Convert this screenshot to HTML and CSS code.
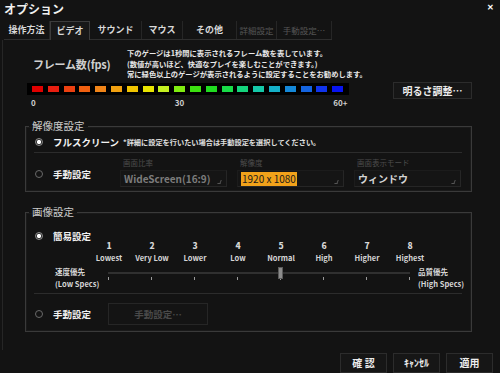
FILE: index.html
```html
<!DOCTYPE html>
<html lang="ja">
<head>
<meta charset="UTF-8">
<meta name="viewport" content="width=device-width, initial-scale=1.0">
<title>オプション</title>
<link rel="stylesheet" href="styles.css">
</head>
<body>
<div class="title-bar">
<span class="title">オプション</span>
<span class="close">✕</span>
</div>
<div class="tabs">
<div class="tab">操作方法</div>
<div class="tab active">ビデオ</div>
<div class="tab">サウンド</div>
<div class="tab">マウス</div>
<div class="tab">その他</div>
<div class="tab disabled">詳細設定</div>
<div class="tab disabled">手動設定…</div>
</div>
<div class="panel">
<div class="fps">
<div class="fps-head">
<div class="fps-title">フレーム数(fps)</div>
<div class="fps-desc">
<p>下のゲージは1秒間に表示されるフレーム数を表しています。</p>
<p>(数値が高いほど、快適なプレイを楽しむことができます。)</p>
<p>常に緑色以上のゲージが表示されるように設定することをお勧めします。</p>
</div>
</div>
<div class="fps-row">
<div class="gauge-wrap">
<div class="gauge">
<span></span><span></span><span></span><span></span><span></span>
<span></span><span></span><span></span><span></span><span></span>
<span></span><span></span><span></span><span></span><span></span>
<span></span><span></span><span></span><span></span><span></span>
</div>
<div class="gauge-scale">
<span>0</span>
<span class="mid">30</span>
<span class="max">60+</span>
</div>
</div>
<button class="btn brightness">明るさ調整…</button>
</div>
</div>

<fieldset class="group">
<legend>解像度設定</legend>
<div class="row full">
<span class="radio checked"></span>
<span class="opt">フルスクリーン</span>
<span class="note">*詳細に設定を行いたい場合は手動設定を選択してください。</span>
</div>
<div class="row manual-res">
<div class="opt-box">
<span class="radio"></span>
<span class="opt">手動設定</span>
</div>
<div class="select-col">
<div class="select-label">画面比率</div>
<div class="select dim"><span>WideScreen(16:9)</span><i class="arrow"></i></div>
</div>
<div class="select-col">
<div class="select-label">解像度</div>
<div class="select"><span class="hl">1920 x 1080</span><i class="arrow"></i></div>
</div>
<div class="select-col">
<div class="select-label">画面表示モード</div>
<div class="select"><span>ウィンドウ</span><i class="arrow"></i></div>
</div>
</div>
</fieldset>

<fieldset class="group gfx">
<legend>画像設定</legend>
<div class="easy">
<div class="row easy-head">
<span class="radio checked"></span>
<span class="opt">簡易設定</span>
</div>
<div class="levels">
<div class="level"><b>1</b><span>Lowest</span></div>
<div class="level"><b>2</b><span>Very Low</span></div>
<div class="level"><b>3</b><span>Lower</span></div>
<div class="level"><b>4</b><span>Low</span></div>
<div class="level"><b>5</b><span>Normal</span></div>
<div class="level"><b>6</b><span>High</span></div>
<div class="level"><b>7</b><span>Higher</span></div>
<div class="level"><b>8</b><span>Highest</span></div>
</div>
<div class="track-row">
<div class="side left">速度優先<br>(Low Specs)</div>
<div class="track">
<div class="track-line"></div>
<div class="ticks"><i></i><i></i><i></i><i></i><i></i><i></i><i></i><i></i></div>
<div class="thumb"></div>
</div>
<div class="side right">品質優先<br>(High Specs)</div>
</div>
</div>
<div class="row manual-gfx">
<div class="opt-box narrow">
<span class="radio"></span>
<span class="opt">手動設定</span>
</div>
<button class="btn manual-btn" disabled>手動設定…</button>
</div>
</fieldset>
</div>

<div class="footer">
<button class="btn foot">確 認</button>
<button class="btn foot">ｷｬﾝｾﾙ</button>
<button class="btn foot">適用</button>
</div>
</body>
</html>
```

FILE: styles.css
```css
body { margin: 0; width: 500px; height: 373px; overflow: hidden; background-color: #131313; color: #e2e2e2; font-family: "Noto Sans CJK JP", "Noto Sans", sans-serif; }
p { margin: 0; }

.title-bar { display: flex; justify-content: space-between; align-items: center; height: 21px; padding: 0 6px 0 4px; box-sizing: border-box; }
.title { font-size: 12px; font-weight: bold; line-height: 16px; color: #f0f0f0; margin-top: -3px; }
.close { font-size: 8px; font-weight: bold; color: #fff; margin-top: -9px; }

.tabs { display: grid; width: max-content; grid-template-columns: 46px 40px 52px 41px 54px 40px 55px; margin-left: 4px; height: 19px; border-bottom: 1px solid #2e2e2e; box-sizing: border-box; }
.tab { font-size: 9px; font-weight: bold; line-height: 18px; text-align: center; color: #d8d8d8; border-right: 1px solid #262626; }
.tab.active { background-color: #181818; border: 1px solid #3c3c3c; border-bottom: none; line-height: 17px; margin-bottom: -1px; }
.tab.disabled { color: #555; font-weight: normal; font-size: 8.5px; }

.panel { margin-left: 2px; border-left: 1px solid #262626; padding: 0 28px 18px 22px; }

.fps-head { display: flex; align-items: center; padding-top: 8px; }
.fps-title { width: 94px; padding-left: 8px; font-size: 11px; font-weight: bold; color: #cfcfcf; line-height: 14px; letter-spacing: -0.2px; }
.fps-desc { font-size: 7.3px; line-height: 10.5px; color: #e8e8e8; font-weight: bold; }
.fps-row { display: flex; align-items: flex-start; margin-top: 3.5px; }
.gauge-wrap { margin-left: 2px; }
.gauge { display: flex; gap: 4.8px; background-color: #000; padding: 3px 6px 3px 5px; height: 6px; }
.gauge span { width: 11px; height: 6px; }
.gauge span:nth-child(1) { background-color: #e00000; }
.gauge span:nth-child(2) { background-color: #e81e10; }
.gauge span:nth-child(3) { background-color: #ec4010; }
.gauge span:nth-child(4) { background-color: #f06010; }
.gauge span:nth-child(5) { background-color: #f08418; }
.gauge span:nth-child(6) { background-color: #f0a010; }
.gauge span:nth-child(7) { background-color: #f0c400; }
.gauge span:nth-child(8) { background-color: #e8e400; }
.gauge span:nth-child(9) { background-color: #c4f020; }
.gauge span:nth-child(10) { background-color: #80ec10; }
.gauge span:nth-child(11) { background-color: #3ce010; }
.gauge span:nth-child(12) { background-color: #20dc20; }
.gauge span:nth-child(13) { background-color: #18dc48; }
.gauge span:nth-child(14) { background-color: #14d47c; }
.gauge span:nth-child(15) { background-color: #14c8a8; }
.gauge span:nth-child(16) { background-color: #14b0c8; }
.gauge span:nth-child(17) { background-color: #1488d8; }
.gauge span:nth-child(18) { background-color: #1464e0; }
.gauge span:nth-child(19) { background-color: #1034ec; }
.gauge span:nth-child(20) { background-color: #0814f0; }
.gauge-scale { display: flex; margin-top: 3px; padding-left: 4px; font-size: 8px; font-weight: bold; line-height: 10px; color: #cfcfcf; }
.gauge-scale .mid { margin-left: 139px; }
.gauge-scale .max { margin-left: 149px; }

.btn { font-family: inherit; background-color: #161616; border: 1px solid #2c2c2c; color: #ececec; font-weight: bold; padding: 0; cursor: pointer; }
.brightness { margin: -1px 0 0 auto; width: 79px; height: 17px; font-size: 10px; line-height: 15px; }

.group { margin: 12px 0 0; padding: 0 9px 0 8px; border: 1px solid #3a3a3a; box-shadow: inset 0 0 0 1px #1a1a1a; min-width: 0; }
.group legend { margin-left: -5px; padding: 0 3px; font-size: 10.5px; line-height: 12px; color: #cccccc; }
.gfx { margin-top: 14px; }

.row { display: flex; align-items: center; }
.radio { width: 6px; height: 6px; border: 1px solid #6a6a6a; border-radius: 50%; margin: 0 10px 0 1px; flex: none; }
.radio.checked { background: radial-gradient(circle, #ffffff 0 1.8px, #2a2a2a 2.4px); border-color: #8a8a8a; }
.opt { font-size: 9.5px; font-weight: bold; line-height: 12px; color: #f2f2f2; }
.full { height: 20px; border-bottom: 1px solid #2c2c2c; }
.note { margin-left: 4px; font-size: 7.2px; font-weight: bold; color: #e0e0e0; }

.manual-res { padding: 5px 0 4px; }
.opt-box { display: flex; align-items: center; width: 86px; margin-top: 3px; }
.opt-box.narrow { width: 74px; margin-top: 0; }
.select-col { width: 107px; margin-right: 10px; }
.select-col:last-child { margin-right: 0; }
.select-label { font-size: 7.5px; line-height: 10px; color: #4c4c4c; padding-left: 3px; }
.select { display: flex; align-items: center; height: 17px; margin-top: 2px; padding: 0 3px; border: 1px solid #262626; border-top-color: #1c1c1c; border-left-color: #1c1c1c; background-color: #151515; font-size: 10px; font-weight: bold; color: #d4d4d4; box-sizing: border-box; }
.select.dim { color: #7c7c7c; }
.select .hl { background-color: #f2a21a; color: #1a1a1a; padding: 0 1px; line-height: 14px; font-weight: normal; }
.select .arrow { margin: 6px 2px 0 auto; width: 2px; height: 3px; border-right: 1px solid #555; border-bottom: 1px solid #555; transform: skewX(-20deg); }

.easy { border-bottom: 1px solid #2c2c2c; padding-bottom: 3px; }
.easy-head { margin-top: 10px; height: 15px; }
.levels { display: grid; grid-template-columns: repeat(8, 43px); margin: -3px 0 0 53.5px; text-align: center; font-weight: bold; color: #d6d6d6; }
.level b { display: block; font-size: 8.5px; line-height: 10px; }
.level span { display: block; margin-top: 3px; font-size: 7.5px; line-height: 10px; white-space: nowrap; }
.track-row { display: flex; margin-top: 3px; }
.side { font-size: 7.5px; font-weight: bold; line-height: 12px; color: #d6d6d6; white-space: nowrap; }
.side.left { width: 74px; padding-left: 21px; flex: none; box-sizing: border-box; }
.side.right { margin-left: 8px; }
.track { position: relative; width: 302px; flex: none; }
.track-line { margin-top: 6px; height: 2px; background-color: #303030; }
.ticks { display: flex; justify-content: space-between; margin-top: 3px; }
.ticks i { width: 1px; height: 3px; background-color: #9a9a9a; }
.thumb { position: absolute; left: 170px; top: 1px; width: 5px; height: 12px; background-color: #8c8c8c; border: 1px solid #5a5a5a; box-sizing: border-box; }

.manual-gfx { padding: 9px 0 6px; }
.manual-btn { width: 100px; height: 22px; font-size: 9.5px; color: #4a4a4a; background-color: #141414; border-color: #262626; cursor: default; }

.footer { display: flex; justify-content: flex-end; gap: 6px; padding-right: 7px; margin-top: 3px; }
.foot { width: 47px; height: 20px; font-size: 10px; line-height: 18px; }
```
